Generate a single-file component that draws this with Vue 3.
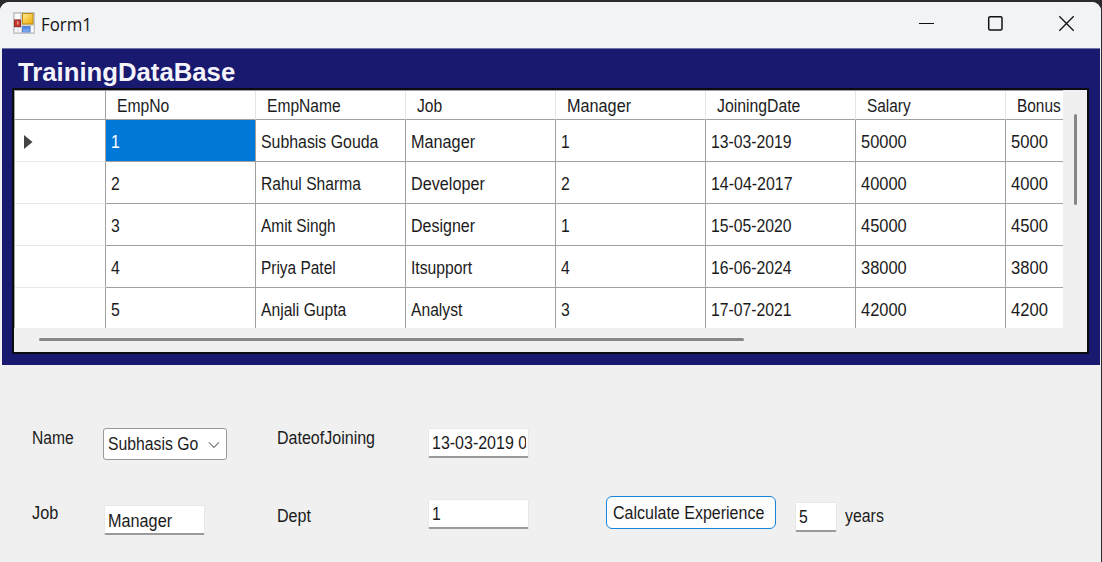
<script setup>
const columns = [
  { name: 'EmpNo', w: 52 },
  { name: 'EmpName', w: 74 },
  { name: 'Job', w: 25 },
  { name: 'Manager', w: 64 },
  { name: 'JoiningDate', w: 83 },
  { name: 'Salary', w: 44 },
  { name: 'Bonus', w: 44 },
]
const rows = [
  [['1', 9], ['Subhasis Gouda', 117], ['Manager', 64], ['1', 9], ['13-03-2019', 81], ['50000', 46], ['5000', 37]],
  [['2', 9], ['Rahul Sharma', 100], ['Developer', 74], ['2', 9], ['14-04-2017', 82], ['40000', 46], ['4000', 37]],
  [['3', 9], ['Amit Singh', 75], ['Designer', 64], ['1', 9], ['15-05-2020', 81], ['45000', 46], ['4500', 37]],
  [['4', 9], ['Priya Patel', 75], ['Itsupport', 61], ['4', 9], ['16-06-2024', 81], ['38000', 46], ['3800', 37]],
  [['5', 9], ['Anjali Gupta', 85], ['Analyst', 51], ['3', 9], ['17-07-2021', 81], ['42000', 46], ['4200', 37]],
]
// Condenses a label horizontally to the given pixel width.
const vFit = (el, { value }) => {
  el.style.transform = `scaleX(${value / el.offsetWidth})`
}
</script>

<template>
  <div class="desktop">
    <div class="window">
      <header class="titlebar">
        <svg class="app-icon" width="22" height="22" viewBox="0 0 22 22">
          <defs>
            <linearGradient id="gold" x1="0" y1="0" x2="1" y2="1">
              <stop offset="0" stop-color="#ffeb91" /><stop offset="1" stop-color="#efaa05" />
            </linearGradient>
            <linearGradient id="blue" x1="0" y1="0" x2="0" y2="1">
              <stop offset="0" stop-color="#3f78d4" /><stop offset="1" stop-color="#8ab9fa" />
            </linearGradient>
          </defs>
          <rect x=".5" y=".5" width="21" height="21" fill="#d2d3d5" stroke="#c4c5c7" />
          <path d="M2 2h5v5H2zM2 16h2.500v4H2zM5.500 16H8v4H5.500zM18 14h2.500v6H18z" fill="#fafafa" />
          <rect x="9.500" y="1.500" width="10.500" height="10.500" fill="url(#gold)" stroke="#bd8b12" />
          <rect x="1.500" y="8" width="6" height="6.500" fill="#c73a31" stroke="#982b28" />
          <rect x="4" y="9.500" width="1.500" height="3" fill="#ef9a8c" />
          <rect x="9.500" y="14.500" width="7.500" height="5.500" fill="url(#blue)" stroke="#5a89d5" />
        </svg>
        <span v-fit="51" class="caption">Form1</span>
        <svg class="controls" width="160" height="20" viewBox="0 0 160 20" fill="none" stroke="#111" stroke-width="1.300">
          <path d="M1 10.500h15" stroke-width="1" />
          <rect x="70.700" y="3.700" width="13.300" height="13.300" rx="1.500" stroke-width="1.500" />
          <path d="M141.300 3.300l14.400 14.400M155.700 3.300l-14.400 14.400" />
        </svg>
      </header>

      <section class="panel">
        <h1 class="heading"><span v-fit="217" class="t">TrainingDataBase</span></h1>
        <div class="grid">
          <div class="cells">
            <div class="row head">
              <div class="rowhead"></div>
              <div v-for="c in columns" :key="c.name" class="cell">
                <span v-fit="c.w" class="t">{{ c.name }}</span>
              </div>
            </div>
            <div v-for="(r, i) in rows" :key="i" class="row">
              <div class="rowhead">
                <svg v-if="i === 0" width="9" height="14" viewBox="0 0 9 14"><path d="M0 0l8.500 7L0 14z" fill="#444" /></svg>
              </div>
              <div v-for="(c, j) in r" :key="j" class="cell" :class="{ selected: i === 0 && j === 0 }">
                <span v-fit="c[1]" class="t">{{ c[0] }}</span>
              </div>
            </div>
          </div>
          <div class="vbar"><i></i></div>
          <div class="hbar"><i></i></div>
        </div>
      </section>

      <section class="form">
        <div class="line first">
          <label class="name"><span v-fit="42" class="t">Name</span></label>
          <div class="combo">
            <span v-fit="90" class="t">Subhasis Go</span>
            <svg width="14" height="8" viewBox="0 0 14 8" fill="none" stroke="#777" stroke-width="1.300"><path d="M1 .8l6 6 6-6" /></svg>
          </div>
          <label class="joined"><span v-fit="98" class="t">DateofJoining</span></label>
          <div class="box date"><div class="clip"><span v-fit="95" class="t">13-03-2019 0</span></div></div>
        </div>
        <div class="line second">
          <label class="job"><span v-fit="26" class="t">Job</span></label>
          <div class="box role"><span v-fit="64" class="t">Manager</span></div>
          <label class="dept"><span v-fit="34" class="t">Dept</span></label>
          <div class="box number"><span v-fit="9" class="t">1</span></div>
          <button class="calc"><span v-fit="151" class="t">Calculate Experience</span></button>
          <div class="box exp"><span v-fit="9" class="t">5</span></div>
          <label class="years"><span v-fit="39" class="t">years</span></label>
        </div>
      </section>
    </div>
  </div>
</template>

<style>
body { margin: 0; overflow: hidden; }
</style>

<style scoped>
* { box-sizing: border-box; }
.desktop {
  width: 1102px; height: 562px; padding: 2px 1px 0 0; background: #2c2a30; overflow: hidden;
  font: 17.500px/20px "Liberation Sans", Arial, sans-serif; color: #1b1b1b;
}
.window { height: 560px; background: #f0f0f0; border-radius: 9px 9px 0 0; overflow: hidden; }
.t { display: inline-block; white-space: nowrap; transform-origin: 0 50%; vertical-align: top; }
.titlebar { height: 46px; display: flex; background: #f2f3f5; padding: 10px 0 0 13px; }
.app-icon { flex: none; }
.caption {
  margin-left: 6px; height: 24px; font: 17.500px/24px "Open Sans", "Noto Sans", sans-serif;
  transform-origin: 0 50%; color: #111;
}
.controls { margin-left: auto; margin-right: 23px; margin-top: 1px; }
.panel { margin: 0 1px 0 2px; height: 317px; background: #191970; padding: 9px 0 0 10px; border-top: 1px solid #7474a6; }
.heading { margin: 0; padding-left: 6px; height: 30px; font-size: 25px; line-height: 28px; font-weight: bold; color: #f4f4fa; }
.grid {
  width: 1077px; height: 266px; border: 2px solid #0b0b12; background: #f0f0f0;
  display: grid; grid-template-columns: 1049px 1fr; grid-template-rows: 238px 1fr;
}
.cells { overflow: hidden; background: #fff; border-left: 1px solid #a0a0a0; border-top: 1px solid #a0a0a0; }
.row { display: flex; height: 42px; width: 1141px; }
.rowhead { flex: none; width: 91px; border-right: 1px solid #a0a0a0; border-bottom: 1px solid #e8e8e8; padding: 15px 0 0 9px; }
.rowhead svg { display: block; }
.cell { flex: none; width: 150px; border-right: 1px solid #a0a0a0; border-bottom: 1px solid #a0a0a0; padding: 12px 0 0 5px; }
.head { height: 29px; }
.head .rowhead { border-bottom-color: #a0a0a0; }
.head .cell { border-right-color: #e5e5e5; padding: 5px 0 0 11px; }
.selected { background: #0078d7; color: #fff; }
.vbar { padding: 24px 0 0 11px; }
.vbar i { display: block; width: 3px; height: 91px; background: #868686; border-radius: 2px; }
.hbar { grid-column: 1 / 3; padding: 10px 0 0 25px; }
.hbar i { display: block; width: 705px; height: 3px; background: #868686; border-radius: 2px; }
.line { display: flex; align-items: flex-start; }
.line > * { flex: none; }
.first { padding: 63px 0 0 32px; height: 131px; }
.second { padding-left: 32px; }
.name { width: 71px; }
.combo {
  width: 124px; height: 32px; background: #fff; border: 1px solid #999; border-radius: 3px;
  display: flex; padding: 5px 6px 0 4px;
}
.combo svg { margin-top: 7px; margin-left: auto; }
.joined { margin-left: 50px; width: 151px; }
.box { background: #fff; border: 1px solid #e8e8e8; border-bottom: 2px solid #9a9a9a; border-radius: 2px; height: 30px; padding: 4px 0 0 3px; }
.date, .number { width: 101px; height: 30px; }
.clip { width: 94px; overflow: hidden; }
.job { width: 72px; margin-top: 7px; }
.role { width: 101px; margin-top: 9px; padding-top: 5px; }
.dept { margin-left: 72px; width: 151px; margin-top: 10px; }
.number { margin-top: 3px; }
.calc {
  margin: 0 0 0 77px; width: 170px; height: 33px; padding: 0 0 0 6px; text-align: left;
  border: 1.500px solid #1683dc; border-radius: 6px; background: #fdfdfd; font: inherit; color: inherit;
}
.exp { margin: 6px 0 0 19px; width: 42px; }
.years { margin: 10px 0 0 8px; }
</style>
